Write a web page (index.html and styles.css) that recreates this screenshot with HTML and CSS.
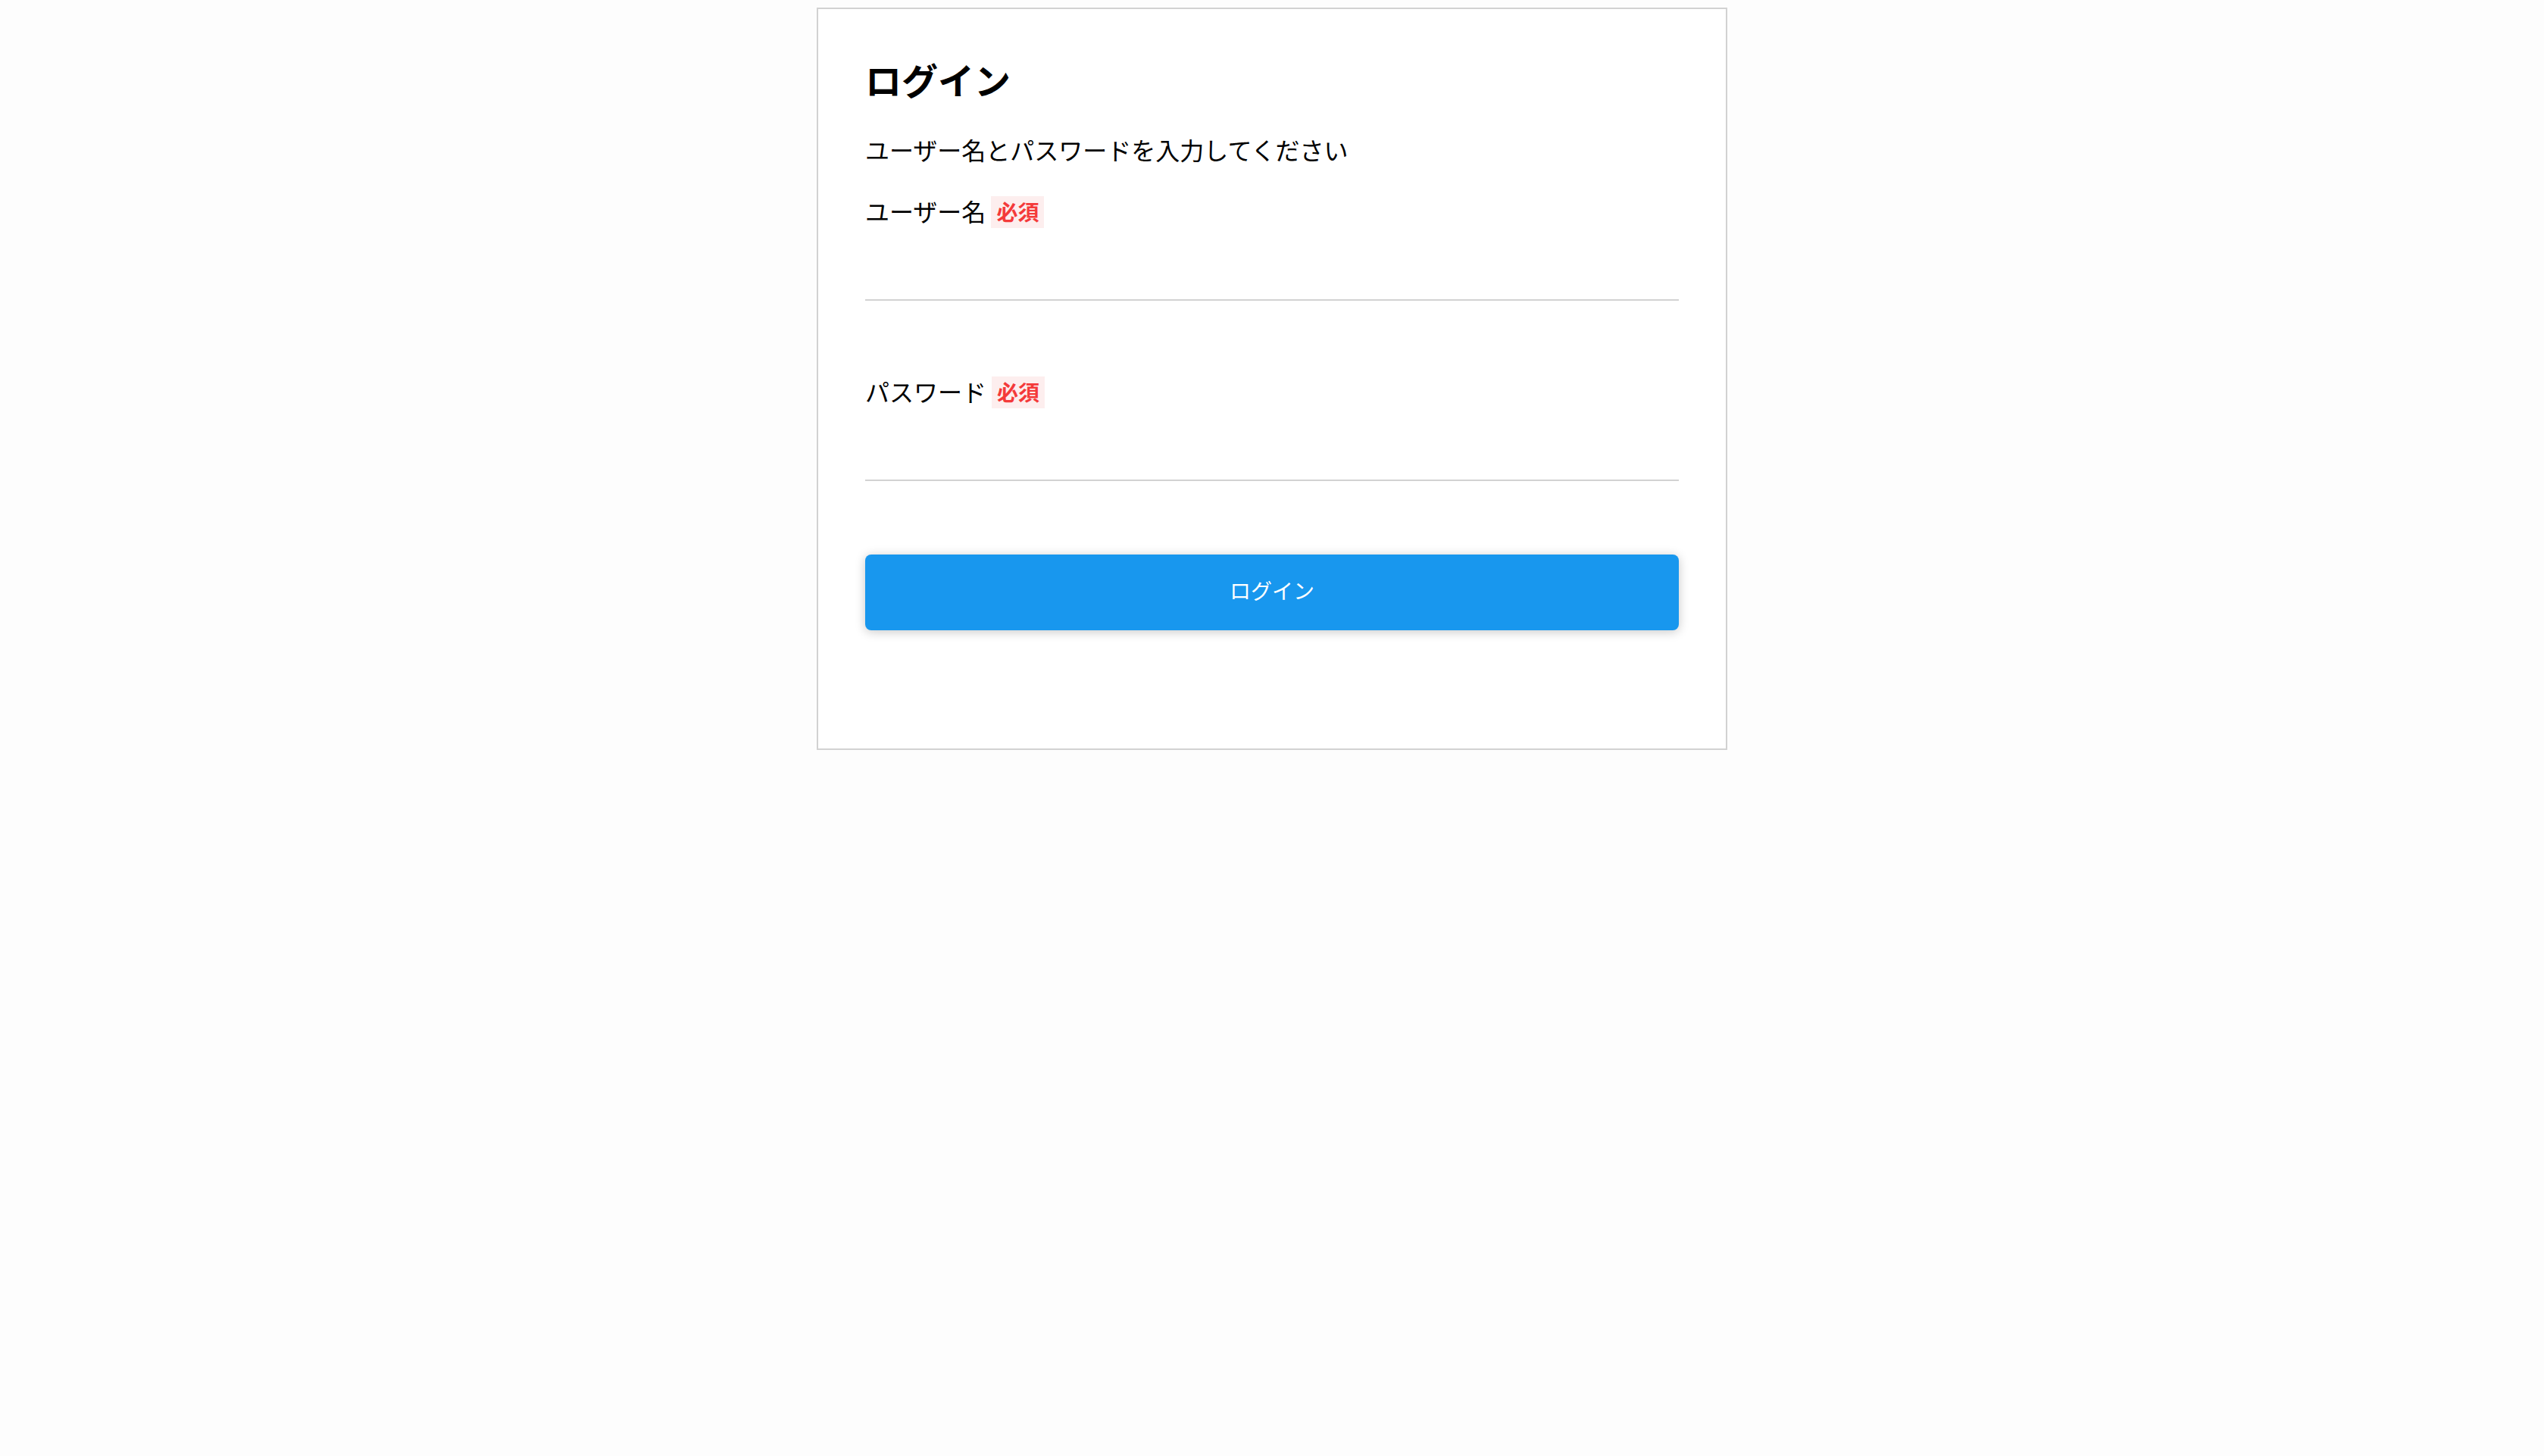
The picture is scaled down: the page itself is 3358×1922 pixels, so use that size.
FILE: index.html
```html
<!DOCTYPE html>
<html lang="ja">
<head>
<meta charset="utf-8">
<title>ログイン</title>
<link rel="stylesheet" href="styles.css">
</head>
<body>
<main class="page">
  <form class="card">
    <h1 class="title">ログイン</h1>
    <p class="lead">ユーザー名とパスワードを入力してください</p>
    <div class="field">
      <label class="label-row" for="username"><span class="label-text">ユーザー名</span><span class="badge">必須</span></label>
      <input class="input" id="username" type="text">
    </div>
    <div class="field">
      <label class="label-row" for="password"><span class="label-text">パスワード</span><span class="badge">必須</span></label>
      <input class="input" id="password" type="password">
    </div>
    <button class="btn" type="button">ログイン</button>
  </form>
</main>
</body>
</html>
```

FILE: styles.css
```css
html, body {
  margin: 0;
  padding: 0;
  background: #fdfdfd;
}
body {
  font-family: "Noto Sans CJK JP", "Noto Sans", sans-serif;
  color: #000;
}
.page {
  display: flex;
  justify-content: center;
  padding-top: 10px;
}
.card {
  box-sizing: border-box;
  width: 1202px;
  height: 980px;
  border: 2px solid #d2d2d2;
  background: #fff;
  padding: 56px 62px 0;
  display: flex;
  flex-direction: column;
}
.title {
  margin: 0;
  font-size: 48px;
  line-height: 72px;
  font-weight: 700;
}
.lead {
  margin: 33px 0 0;
  font-size: 32px;
  line-height: 48px;
}
.field {
  display: flex;
  flex-direction: column;
  margin-top: 38px;
}
.field + .field {
  margin-top: 100px;
}
.label-row {
  display: flex;
  align-items: center;
  height: 42px;
}
.label-text {
  font-size: 32px;
  line-height: 42px;
  padding-bottom: 4px;
}
.badge {
  margin-left: 7px;
  padding: 0 7px 2px;
  height: 40px;
  line-height: 40px;
  font-size: 28px;
  font-weight: 700;
  color: #f43a3a;
  background: #fdeeee;
}
.input {
  box-sizing: border-box;
  width: 100%;
  height: 96px;
  margin: 0;
  padding: 0;
  border: none;
  border-bottom: 2px solid #d2d2d2;
  background: transparent;
  font-family: inherit;
  font-size: 32px;
  outline: none;
}
.btn {
  margin-top: 97px;
  height: 100px;
  width: 100%;
  padding: 0 0 6px;
  border: none;
  border-radius: 8px;
  background: #1897ee;
  color: #fff;
  font-family: inherit;
  font-size: 28px;
  box-shadow: 0 2px 14px rgba(0, 0, 0, 0.22);
  cursor: pointer;
}
```
